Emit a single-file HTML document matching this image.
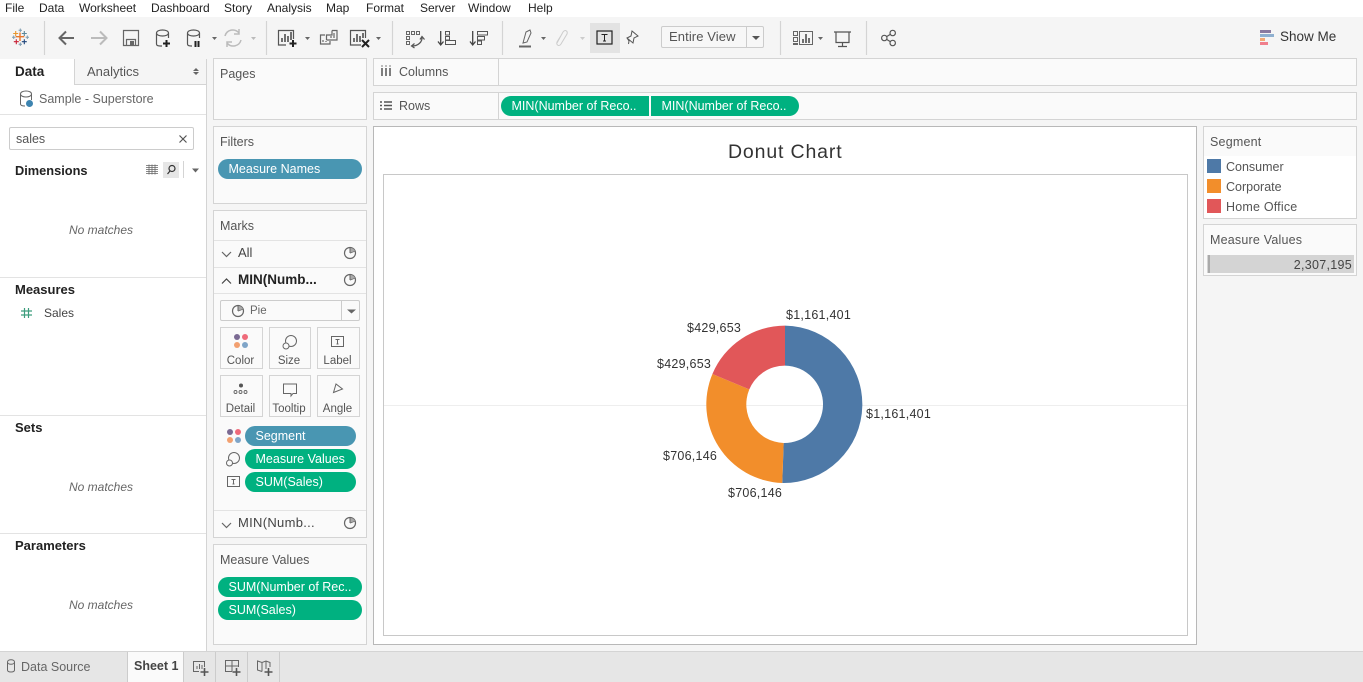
<!DOCTYPE html>
<html><head><meta charset="utf-8"><style>
html,body{margin:0;padding:0}
body{width:1363px;height:682px;overflow:hidden;background:#f5f5f5;position:relative;font-family:"Liberation Sans",sans-serif;font-size:12.5px;color:#444}
.a,.t{position:absolute}
.t{white-space:nowrap;line-height:16px}
.card{position:absolute;box-sizing:border-box;background:#fafafa;border:1px solid #d4d4d4}
.pill{position:absolute;box-sizing:border-box;height:20px;line-height:20px;color:#fff;padding-left:10.5px;white-space:nowrap;border-radius:10px;font-size:12.5px;letter-spacing:0}
.g{background:#00b180}.b{background:#4996b2}
.btn{position:absolute;box-sizing:border-box;background:#fafafa;border:1px solid #d4d4d4;width:43px;height:42px;text-align:center;font-size:11.5px;color:#555;padding:26px 2px 0 0;line-height:14px}
svg{position:absolute;overflow:visible}
.m{top:0;color:#222;font-size:12px}
.h{font-weight:bold;color:#222;font-size:13px}
.nm{font-style:italic;color:#666;font-size:12px}
.lbl{color:#333;font-size:12.5px;letter-spacing:.25px}
</style></head><body>
<div class="a" style="left:0;top:0;width:1363px;height:17px;background:#fff"></div>
<span class="t m" style="left:5px">File</span><span class="t m" style="left:39px">Data</span><span class="t m" style="left:79px">Worksheet</span><span class="t m" style="left:151px">Dashboard</span><span class="t m" style="left:224px">Story</span><span class="t m" style="left:267px">Analysis</span><span class="t m" style="left:326px">Map</span><span class="t m" style="left:366px">Format</span><span class="t m" style="left:420px">Server</span><span class="t m" style="left:468px">Window</span><span class="t m" style="left:528px">Help</span>

<svg style="left:0;top:0" width="1363" height="60" fill="none" stroke="#555" stroke-width="1.2">
<g stroke="#d4d4d4"><path d="M44.500 21V55M266.500 21V55M392.500 21V55M502.500 21V55M780.500 21V55M866.500 21V55"/></g>
<path d="M20 32.500V41M15.700 36.700H24.300" stroke="#e8762c" stroke-width="1.400"/>
<path d="M15.700 31V36M13.200 33.500H18.200" stroke="#e8962c" stroke-width="1.100"/>
<path d="M24.300 31V36M21.800 33.500H26.800" stroke="#5b879b" stroke-width="1.100"/>
<path d="M16.300 39.200V44.200M13.800 41.700H18.800" stroke="#c72035" stroke-width="1.100"/>
<path d="M24.300 39.200V44.200M21.800 41.700H26.800" stroke="#1f447a" stroke-width="1.100"/>
<path d="M20.300 28.500V32M18.600 30.300H22M13.700 35.500V39M12 37.300H15.400M27.300 35.500V39M25.600 37.300H29M20.300 42.500V46M18.600 44.300H22" stroke="#7d9cb0" stroke-width="1"/>
<path d="M74 38H60M66 31.500L59.500 38L66 44.500" stroke="#666" stroke-width="2"/>
<path d="M91 38H106M100 31.500L106.500 38L100 44.500" stroke="#bbb" stroke-width="2"/>
<path d="M123.500 30.500H138.500V45.500H123.500ZM126.500 45.500V39.500H135.500V45.500" stroke="#666"/><path d="M130 41H134V45H130Z" fill="#666" stroke="none"/>
<path d="M156.500 33V44Q156.500 46 160 46H162M168.500 33V38M156.500 33C156.500 29 168.500 29 168.500 33C168.500 37 156.500 37 156.500 33Z"/><path d="M166.500 40V47M163 43.500H170" stroke="#222" stroke-width="2"/>
<path d="M187.500 33V44Q187.500 46 191 46H192M199.500 33V38M187.500 33C187.500 29 199.500 29 199.500 33C199.500 37 187.500 37 187.500 33Z"/><path d="M195.500 41V47M198.500 41V47" stroke="#222" stroke-width="2"/>
<path d="M212 37H217L214.500 40Z" fill="#666" stroke="none"/>
<path d="M225 36A8 8 0 0 1 239 33M241 40A8 8 0 0 1 227 43M239 29V34H234M227 47V42H232" stroke="#bbb" stroke-width="1.5"/>
<path d="M251 37H256L253.500 40Z" fill="#bbb" stroke="none"/>
<path d="M286 45H278.500V30.500H293.500V39"/><path d="M282 42V38M285 42V34M288 42V36M291 40V32" stroke="#444" stroke-width="1.5"/><path d="M293 40V47M289.500 43.500H296.500" stroke="#222" stroke-width="2"/>
<path d="M305 37H310L307.500 40Z" fill="#666" stroke="none"/>
<path d="M325 35H320.500V44H330V41M326.500 40V35H332V30.500M332 30.500H337V40H326.500" stroke="#666"/><path d="M334 33V38M331 36V38M323 40V42M326 41V42" stroke="#666"/>
<path d="M361 45H350.500V30.500H365.500V38"/><path d="M354 42V38M357 42V34M360 42V36M363 38V33" stroke="#444" stroke-width="1.5"/><path d="M362 40L369 47M369 40L362 47" stroke="#222" stroke-width="2"/>
<path d="M376 37H381L378.500 40Z" fill="#666" stroke="none"/>
<path d="M406.500 31.500h3v3h-3zM411.500 31.500h3v3h-3zM416.500 31.500h3v3h-3zM406.500 36.500h3v3h-3zM406.500 41.500h3v3h-3z" stroke="#666" stroke-width="1"/><path d="M422 37C422.500 42 418 46 412 46M414.500 43.500L411.500 46L414.500 48M420 39.500L422 36.500L424.500 39.500" stroke="#555"/>
<path d="M440.700 31V44M438 41.500L440.700 45L443.500 41.500" stroke="#444" stroke-width="1.300"/><path d="M445.500 31.500H449.500V35H445.500ZM445.500 36.500H449.500V40H445.500ZM445.500 40.500H455.500V44.500H445.500Z" stroke="#555" stroke-width="1"/>
<path d="M472.700 31V44M470 41.500L472.700 45L475.500 41.500" stroke="#444" stroke-width="1.300"/><path d="M477.500 31.500H487.500V35H477.500ZM477.500 36.500H484.500V40H477.500ZM477.500 41H481.500V44.500H477.500Z" stroke="#555" stroke-width="1"/>
<path d="M523 43L526 32L530 30L531 33L527 42Z" stroke="#666" stroke-width="1"/><path d="M519 46.500H531" stroke="#666" stroke-width="2"/>
<path d="M541 37H546L543.500 40Z" fill="#666" stroke="none"/>
<path d="M557 43L563 32C565 29 568 31 567 34L561 44C559 47 556 45 557 42L562 34" stroke="#ccc" stroke-width="1"/>
<path d="M580 37H585L582.500 40Z" fill="#ccc" stroke="none"/>
<rect x="590" y="23" width="30" height="30" fill="#e3e3e3" stroke="none"/>
<rect x="597" y="31" width="15" height="13" stroke="#222"/><path d="M601.500 34.500H607.500M604.500 34.500V41M603 41H606" stroke="#222" stroke-width="1"/>
<path d="M632 31L638 36L634 38L633 43L627 38L631 36ZM627 38L629 41L628.500 44" stroke="#555" stroke-width="1"/>
<path d="M793.500 31.500h4v4h-4zM793.500 37.500h4v4h-4zM793.500 43.500h4v1h-4zM799.500 31.500H812.500V44.500H799.500Z" stroke="#666" stroke-width="1"/><path d="M803 43V39M806 43V34M809 43V38" stroke="#444" stroke-width="1.500"/>
<path d="M818 37H823L820.500 40Z" fill="#666" stroke="none"/>
<path d="M834 32H851M836 32V42.500H849V32M842.500 42.500V46.500M838 46.500H847" stroke="#555"/>
<circle cx="884.300" cy="38" r="2.700"/><circle cx="892.700" cy="33" r="2.700"/><circle cx="892.700" cy="43" r="2.700"/><path d="M886.800 36.500L890.300 34.400M886.800 39.500L890.300 41.600"/>
<g stroke="none"><rect x="1260" y="30" width="11" height="3" fill="#8a7aa0"/><rect x="1260" y="34" width="14" height="3" fill="#8fb0d0"/><rect x="1260" y="38" width="5" height="3" fill="#f2a975"/><rect x="1260" y="42" width="8" height="3" fill="#f07f8c"/></g>
</svg>
<div class="a" style="left:661px;top:26px;width:103px;height:22px;box-sizing:border-box;border:1px solid #ccc;border-radius:2px;background:#f7f7f7"></div>
<div class="a" style="left:746px;top:27px;width:1px;height:20px;background:#ccc"></div>
<div class="a" style="left:752px;top:36px;border:4px solid transparent;border-top:4px solid #555"></div>
<span class="t" style="left:669px;top:29px;color:#555;font-size:13px;letter-spacing:.1px">Entire View</span>
<span class="t" style="left:1280px;top:29px;color:#333;font-size:13.500px">Show Me</span>

<!-- left panel -->
<div class="a" style="left:0;top:59px;width:207px;height:593px;background:#fff;border-right:1px solid #d4d4d4;box-sizing:border-box"></div>
<div class="a" style="left:74px;top:59px;width:132px;height:26px;background:#f5f5f5;border-left:1px solid #d4d4d4;border-bottom:1px solid #d4d4d4;box-sizing:border-box"></div>
<span class="t h" style="left:15px;top:64px;font-size:13.500px">Data</span>
<span class="t" style="left:87px;top:64px;font-size:13px;color:#555">Analytics</span>
<div class="a" style="left:193px;top:65px;border:3px solid transparent;border-bottom:3px solid #666;height:0"></div>
<div class="a" style="left:193px;top:72px;border:3px solid transparent;border-top:3px solid #666"></div>
<div class="a" style="left:0;top:114px;width:206px;height:1px;background:#e3e3e3"></div>
<svg style="left:0;top:0" width="207" height="682" fill="none" stroke="#666">
<path d="M20.500 94V104Q20.500 106 25 106M31.500 94V100M20.500 94C20.500 90 31.500 90 31.500 94C31.500 98 20.500 98 20.500 94Z"/><circle cx="29.500" cy="103.500" r="3.500" fill="#3d84b0" stroke="none"/>
<path d="M179.500 135.500L186.500 142.500M186.500 135.500L179.500 142.500" stroke="#555" stroke-width="1.200"/>
<path d="M146 166H158M146 168H158M146 170H158M146 172H158M146 174H158M149 165V175M152 165V175M155 165V175" stroke="#666" stroke-width=".8" transform="translate(0 -0.500)"/>
<rect x="163" y="162" width="16" height="16" fill="#e6e6e6" stroke="none"/><circle cx="172" cy="168.500" r="3" stroke="#333" stroke-width="1.200"/><path d="M170 171L167.500 174" stroke="#333" stroke-width="1.200"/>
<path d="M183.500 161V178" stroke="#d4d4d4"/><path d="M192 168.500H199L195.500 172.500Z" fill="#666" stroke="none"/>
<path d="M24.500 308V318M28.500 308V318M21 311H32M21 315H32" stroke="#3d9d7d" stroke-width="1.200"/>
</svg>
<span class="t" style="left:39px;top:91px;color:#666;font-size:12.500px">Sample - Superstore</span>
<div class="a" style="left:9px;top:127px;width:185px;height:23px;box-sizing:border-box;border:1px solid #ccc;border-radius:2px"></div>
<span class="t" style="left:16px;top:131px;color:#555;font-size:12.500px">sales</span>
<span class="t h" style="left:15px;top:163px;font-size:12.800px">Dimensions</span>
<span class="t nm" style="left:69px;top:222px">No matches</span>
<div class="a" style="left:0;top:277px;width:206px;height:1px;background:#e3e3e3"></div>
<span class="t h" style="left:15px;top:282px">Measures</span>
<span class="t" style="left:44px;top:305px;color:#444;font-size:12px">Sales</span>
<div class="a" style="left:0;top:415px;width:206px;height:1px;background:#e3e3e3"></div>
<span class="t h" style="left:15px;top:420px">Sets</span>
<span class="t nm" style="left:69px;top:479px">No matches</span>
<div class="a" style="left:0;top:533px;width:206px;height:1px;background:#e3e3e3"></div>
<span class="t h" style="left:15px;top:538px">Parameters</span>
<span class="t nm" style="left:69px;top:597px">No matches</span>

<!-- middle cards -->
<div class="card" style="left:213px;top:58px;width:154px;height:62px"></div>
<span class="t" style="left:220px;top:66px;color:#555;font-size:12.500px">Pages</span>
<div class="card" style="left:213px;top:126px;width:154px;height:78px"></div>
<span class="t" style="left:220px;top:134px;color:#555;font-size:12.500px">Filters</span>
<div class="pill b" style="left:218px;top:159px;width:144px">Measure Names</div>
<div class="card" style="left:213px;top:210px;width:154px;height:328px"></div>
<span class="t" style="left:220px;top:218px;color:#555;font-size:12.500px">Marks</span>
<div class="a" style="left:214px;top:240px;width:152px;height:1px;background:#e3e3e3"></div>
<div class="a" style="left:214px;top:267px;width:152px;height:1px;background:#e3e3e3"></div>
<div class="a" style="left:214px;top:293px;width:152px;height:1px;background:#e3e3e3"></div>
<div class="a" style="left:214px;top:510px;width:152px;height:1px;background:#e3e3e3"></div>
<span class="t" style="left:238px;top:245px;color:#444;font-size:13px">All</span>
<span class="t" style="left:238px;top:272px;color:#222;font-size:13.500px;font-weight:bold">MIN(Numb...</span>
<span class="t" style="left:238px;top:515px;color:#444;font-size:13px;letter-spacing:.3px">MIN(Numb...</span>
<div class="a" style="left:220px;top:300px;width:140px;height:21px;box-sizing:border-box;background:#fafafa;border:1px solid #ccc;border-radius:2px"></div>
<div class="a" style="left:341px;top:301px;width:1px;height:19px;background:#ccc"></div>
<span class="t" style="left:250px;top:303px;color:#666;font-size:11.500px">Pie</span>
<div class="btn" style="left:220px;top:327px">Color</div>
<div class="btn" style="left:269px;top:327px;width:42px">Size</div>
<div class="btn" style="left:317px;top:327px">Label</div>
<div class="btn" style="left:220px;top:375px">Detail</div>
<div class="btn" style="left:269px;top:375px;width:42px">Tooltip</div>
<div class="btn" style="left:317px;top:375px">Angle</div>
<div class="pill b" style="left:245px;top:426px;width:111px">Segment</div>
<div class="pill g" style="left:245px;top:449px;width:111px">Measure Values</div>
<div class="pill g" style="left:245px;top:472px;width:111px">SUM(Sales)</div>
<svg style="left:0;top:0" width="400" height="682" fill="none" stroke="#666">
<path d="M222 252L226.500 256.500L231 252M222 523L226.500 527.500L231 523" stroke="#666" stroke-width="1.200"/>
<path d="M222 283.500L226.500 279L231 283.500" stroke="#444" stroke-width="1.200"/>
<g id="p1"><circle cx="350" cy="253" r="5.500" stroke="#666" stroke-width="1.200"/><path d="M350 253V247.500M350 253L355 251" stroke-width="1"/><path d="M350.500 252.500V248A5 5 0 0 1 355 251Z" fill="#aaa" stroke="none"/></g>
<g transform="translate(0 27)"><circle cx="350" cy="253" r="5.500" stroke-width="1.200"/><path d="M350 253V247.500M350 253L355 251"/><path d="M350.500 252.500V248A5 5 0 0 1 355 251Z" fill="#aaa" stroke="none"/></g>
<g transform="translate(0 270)"><circle cx="350" cy="253" r="5.500" stroke-width="1.200"/><path d="M350 253V247.500M350 253L355 251"/><path d="M350.500 252.500V248A5 5 0 0 1 355 251Z" fill="#aaa" stroke="none"/></g>
<g transform="translate(-112 58)"><circle cx="350" cy="253" r="5.500" stroke-width="1.200"/><path d="M350 253V247.500M350 253L355 251"/><path d="M350.500 252.500V248A5 5 0 0 1 355 251Z" fill="#aaa" stroke="none"/></g>
<path d="M347 309.500H356L351.500 313.500Z" fill="#666" stroke="none"/>
<g stroke="none"><circle cx="237" cy="337" r="3" fill="#7b6a93"/><circle cx="245" cy="337" r="3" fill="#ef6a7a"/><circle cx="237" cy="345" r="3" fill="#f2a070"/><circle cx="245" cy="345" r="3" fill="#7fa5c8"/></g>
<circle cx="291" cy="341" r="5.500"/><circle cx="286" cy="346" r="3" fill="#fafafa"/>
<rect x="331.500" y="336.500" width="12" height="10"/><path d="M335.500 339.500H339.500M337.500 339.500V344M336.500 344H338.500"/>
<circle cx="241" cy="385.500" r="2" fill="#555" stroke="none"/><g stroke-width=".9"><circle cx="235.500" cy="392" r="1.500"/><circle cx="240.500" cy="392" r="1.500"/><circle cx="245.500" cy="392" r="1.500"/></g>
<path d="M283.500 384.500H296.500V394H293L291 396.500V394H283.500Z" transform="translate(0 -.5)"/>
<path d="M333.500 392.500L336 384L342.500 389Z"/>
<g stroke="none"><circle cx="230" cy="432" r="3" fill="#7b6a93"/><circle cx="238" cy="432" r="3" fill="#ef6a7a"/><circle cx="230" cy="440" r="3" fill="#f2a070"/><circle cx="238" cy="440" r="3" fill="#7fa5c8"/></g>
<circle cx="234" cy="458" r="5.500"/><circle cx="229.500" cy="463" r="3" fill="#fafafa"/>
<rect x="227.500" y="476.500" width="12" height="10"/><path d="M231.500 479.500H235.500M233.500 479.500V484M232.500 484H234.500"/>
</svg>
<div class="card" style="left:213px;top:544px;width:154px;height:101px"></div>
<span class="t" style="left:220px;top:552px;color:#555;font-size:12.500px">Measure Values</span>
<div class="pill g" style="left:218px;top:577px;width:144px">SUM(Number of Rec..</div>
<div class="pill g" style="left:218px;top:600px;width:144px">SUM(Sales)</div>

<!-- shelves -->
<div class="card" style="left:373px;top:58px;width:984px;height:28px"></div>
<div class="card" style="left:373px;top:92px;width:984px;height:28px"></div>
<div class="a" style="left:498px;top:59px;width:1px;height:26px;background:#d4d4d4"></div>
<div class="a" style="left:498px;top:93px;width:1px;height:26px;background:#d4d4d4"></div>
<span class="t" style="left:399px;top:64px;color:#555;font-size:12.500px">Columns</span>
<span class="t" style="left:399px;top:98px;color:#555;font-size:12.500px">Rows</span>
<svg style="left:0;top:0" width="400" height="120" fill="none" stroke="#555" stroke-width="1.500">
<path d="M382 68V76M386 68V76M390 68V76"/><path d="M382 65.500V66.500M386 65.500V66.500M390 65.500V66.500"/>
<path d="M384 102H392M384 105.500H392M384 109H392M380 102H382M380 105.500H382M380 109H382"/>
</svg>
<div class="pill g" style="left:501px;top:96px;width:148px;border-radius:10px 0 0 10px">MIN(Number of Reco..</div>
<div class="pill g" style="left:651px;top:96px;width:148px;border-radius:0 10px 10px 0">MIN(Number of Reco..</div>

<!-- view -->
<div class="a" style="left:373px;top:126px;width:824px;height:519px;box-sizing:border-box;background:#fff;border:1px solid #b8b8b8"></div>
<div class="a" style="left:383px;top:174px;width:805px;height:462px;box-sizing:border-box;border:1px solid #c8c8c8"></div>
<div class="a" style="left:384px;top:405px;width:803px;height:1px;background:#eee"></div>
<span class="t" style="left:728px;top:141px;font-size:19.500px;line-height:22px;color:#333;letter-spacing:.85px">Donut Chart</span>
<svg style="left:0;top:0" width="1363" height="682">
<path d="M785 325.600A78.700 78.700 0 0 1 782.250 483L783.650 443A38.700 38.700 0 0 0 785 365.600Z" fill="#4e79a7"/>
<path d="M782.250 483A78.700 78.700 0 0 1 712.400 374L749.300 389.400A38.700 38.700 0 0 0 783.650 443Z" fill="#f28e2b"/>
<path d="M712.400 374A78.700 78.700 0 0 1 785 325.600V365.600A38.700 38.700 0 0 0 749.300 389.400Z" fill="#e15759"/>
</svg>
<span class="t lbl" style="left:786px;top:307px">$1,161,401</span>
<span class="t lbl" style="left:866px;top:406px">$1,161,401</span>
<span class="t lbl" style="left:687px;top:320px">$429,653</span>
<span class="t lbl" style="left:657px;top:356px">$429,653</span>
<span class="t lbl" style="left:663px;top:448px">$706,146</span>
<span class="t lbl" style="left:728px;top:485px">$706,146</span>

<!-- legends -->
<div class="card" style="left:1203px;top:126px;width:154px;height:93px"></div>
<div class="a" style="left:1204px;top:156px;width:152px;height:62px;background:#fff"></div>
<span class="t" style="left:1210px;top:134px;color:#555;font-size:12.500px;letter-spacing:.2px">Segment</span>
<div class="a" style="left:1207px;top:159px;width:14px;height:14px;background:#4e79a7"></div>
<div class="a" style="left:1207px;top:179px;width:14px;height:14px;background:#f28e2b"></div>
<div class="a" style="left:1207px;top:199px;width:14px;height:14px;background:#e15759"></div>
<span class="t" style="left:1226px;top:159px;color:#555;font-size:12.500px">Consumer</span>
<span class="t" style="left:1226px;top:179px;color:#555;font-size:12.500px">Corporate</span>
<span class="t" style="left:1226px;top:199px;color:#555;font-size:12.500px;letter-spacing:.2px">Home Office</span>
<div class="card" style="left:1203px;top:224px;width:154px;height:52px"></div>
<span class="t" style="left:1210px;top:232px;color:#555;font-size:12.500px;letter-spacing:.2px">Measure Values</span>
<div class="a" style="left:1207px;top:255px;width:147px;height:18px;background:#d4d4d4"></div>
<div class="a" style="left:1208px;top:255px;width:2px;height:18px;background:#aaa"></div>
<span class="t" style="right:11px;top:257px;color:#444;font-size:12.500px;letter-spacing:.3px">2,307,195</span>

<!-- bottom -->
<div class="a" style="left:0;top:651px;width:1363px;height:31px;background:#e6e6e6;border-top:1px solid #d4d4d4;box-sizing:border-box"></div>
<div class="a" style="left:127px;top:652px;width:57px;height:30px;background:#fafafa;border-left:1px solid #ccc;border-right:1px solid #ccc;box-sizing:border-box"></div>
<div class="a" style="left:215px;top:652px;width:1px;height:30px;background:#ccc"></div>
<div class="a" style="left:247px;top:652px;width:1px;height:30px;background:#ccc"></div>
<div class="a" style="left:279px;top:652px;width:1px;height:30px;background:#ccc"></div>
<span class="t" style="left:21px;top:659px;color:#666;font-size:12.500px">Data Source</span>
<span class="t" style="left:134px;top:658px;color:#444;font-size:12.500px;font-weight:bold">Sheet 1</span>
<svg style="left:0;top:0" width="300" height="682" fill="none" stroke="#666">
<path d="M7.500 662V670Q7.500 672 11 672Q14.500 672 14.500 670V662M7.500 662C7.500 659 14.500 659 14.500 662C14.500 665 7.500 665 7.500 662Z"/>
<path d="M199 671.500H193.500V661.500H204.500V667"/><path d="M197 669V666M199.500 669V664M202 669V665" stroke-width="1"/><path d="M204.500 668V676M200.500 672H208.500" stroke="#555" stroke-width="1.600"/>
<path d="M232 671.500H225.500V660.500H238.500V667M225.500 666H238.500M232 660.500V671.500"/><path d="M236.500 668V676M232.500 672H240.500" stroke="#555" stroke-width="1.600"/>
<path d="M262 671.500L257.500 670V661L262 662.500L266 661L270 662.500V667M262 662.500V671.500M266 661V669"/><path d="M268.500 668V676M264.500 672H272.500" stroke="#555" stroke-width="1.600"/>
</svg>
</body></html>
